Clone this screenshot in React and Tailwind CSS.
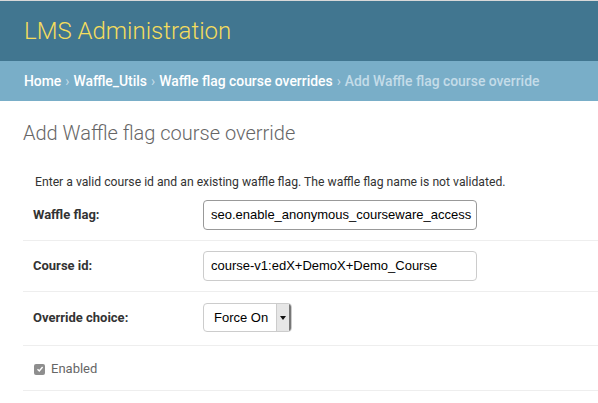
import React from "react";

const Row = ({ label, children, className = "" }) => (
    <div className={`flex items-center border-b border-[#eee] px-[10px] py-[10px] ${className}`}>
        <label className="w-[170px] shrink-0 text-[13px] font-bold text-[#333]">{label}</label>
        {children}
    </div>
);

export default function App() {
    const crumbs = ["Home", "Waffle_Utils", "Waffle flag course overrides"];

    return (
        <div className="min-h-screen bg-white font-['Roboto',sans-serif]">
            <div className="h-px bg-[#d8d8d8]" />

            {/* header */}
            <div className="flex h-[60px] items-center bg-[#417690] px-[24px]">
                <h1 className="text-[24px] font-light leading-none text-[#f5dd5d]">LMS Administration</h1>
            </div>

            {/* breadcrumbs */}
            <div className="flex h-[40px] items-center bg-[#79aec8] px-[24px] text-[13.9px] text-[#c4dce8]">
                {crumbs.map((c) => (
                    <span key={c}>
                        <a className="font-medium text-white">{c}</a>
                        <span className="px-[4px]">›</span>
                    </span>
                ))}
                <span className="font-medium">Add Waffle flag course override</span>
            </div>

            <div className="pl-[23px]">
                <h2 className="pt-[20px] text-[20px] font-light leading-[24px] text-[#666]">
                    Add Waffle flag course override
                </h2>

                <p className="mt-[29px] pl-[12px] text-[12.2px] leading-[16px] text-[#333]">
                    Enter a valid course id and an existing waffle flag. The waffle flag name is not validated.
                </p>

                <Row label="Waffle flag:">
                    <div className="flex h-[30px] w-[274px] items-center rounded-[4px] border border-[#999] px-[6px] font-['Liberation_Sans',sans-serif] text-[13px] text-black">
                        <span className="mr-px h-[20px] w-px bg-black" />
                        seo.enable_anonymous_courseware_access
                    </div>
                </Row>

                <Row label="Course id:">
                    <div className="flex h-[30px] w-[274px] items-center rounded-[4px] border border-[#ccc] px-[7px] font-['Liberation_Sans',sans-serif] text-[13px] text-black">
                        course-v1:edX+DemoX+Demo_Course
                    </div>
                </Row>

                <Row label="Override choice:" className="pt-[11px] pb-[13px]">
                    <div className="flex h-[29px] w-[89px] overflow-hidden rounded-[4px] border border-[#ccc]">
                        <div className="flex flex-1 items-center pl-[10px] font-['Liberation_Sans',sans-serif] text-[13px] text-black">
                            Force On
                        </div>
                        <div className="flex w-[15px] items-center justify-center border-l border-[#ccc] border-r-2 border-r-[#777] bg-[#e6e6e6]">
                            <svg width="6" height="4" viewBox="0 0 6 4">
                                <path d="M0 0h6L3 4z" fill="#111" />
                            </svg>
                        </div>
                    </div>
                </Row>

                <div className="flex h-[45px] items-center border-b border-[#eee] pl-[11px] pt-[2px]">
                    <span className="flex h-[11px] w-[11px] items-center justify-center rounded-[2px] bg-[#8e8e8e]">
                        <svg width="8" height="8" viewBox="0 0 8 8">
                            <path d="M1.5 4.2l1.8 1.8L6.6 2" stroke="#fff" strokeWidth="1.4" fill="none" />
                        </svg>
                    </span>
                    <span className="ml-[6px] text-[13px] text-[#666]">Enabled</span>
                </div>
            </div>
        </div>
    );
}
